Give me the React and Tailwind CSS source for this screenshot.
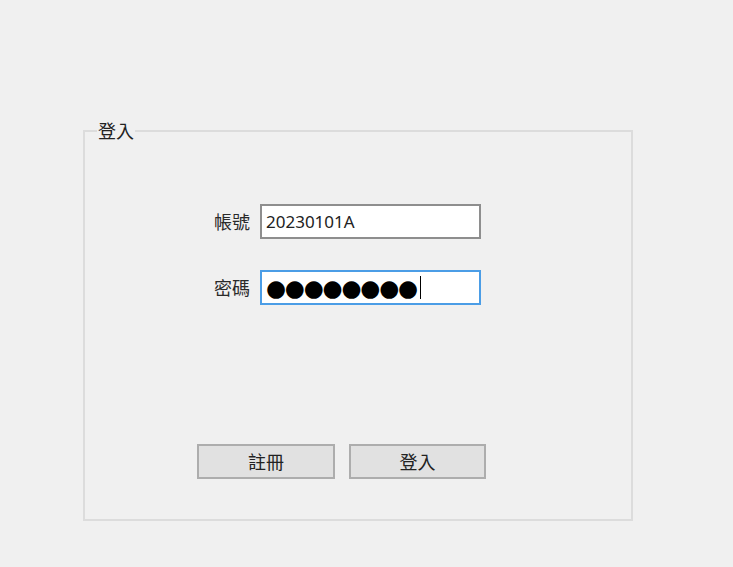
import React from 'react';

const font = { fontFamily: '"Noto Sans", "Noto Sans CJK TC", sans-serif' };

const Field = ({ label, children, focused = false }) => (
  <div className="flex items-center">
    <label className="w-[50px] pr-[10px] text-right text-[18px] leading-[20px] text-[#2a2a2a]">{label}</label>
    <div
      className={`flex h-[35px] w-[221px] items-center bg-white px-[4px] border-2 ${
        focused ? 'border-[#4b9de6]' : 'border-[#8e8e8e]'
      }`}
    >
      {children}
    </div>
  </div>
);

const Button = ({ children, width }) => (
  <button
    type="button"
    className={`h-[35px] ${width} border-2 border-[#adadad] bg-[#e1e1e1] text-[18px] leading-[20px] text-[#222]`}
  >
    {children}
  </button>
);

export default function App() {
  return (
    <div className="h-[567px] w-[733px] overflow-hidden bg-[#f0f0f0]" style={font}>
      <fieldset className="ml-[83px] mt-[121px] h-[400px] w-[550px] border-2 border-[#dcdcdc]">
        <legend className="ml-[12px] px-[1px] text-[18px] leading-[20px] text-[#222]">登入</legend>
        <div className="flex flex-col pl-[125px] pt-[63px]">
          <Field label="帳號">
            <span className="text-[17px] leading-[20px] text-[#222]">20230101A</span>
          </Field>
          <div className="mt-[31px]">
            <Field label="密碼" focused>
              <span className="flex items-center">
                <span
                  className="text-[23px] leading-[20px] tracking-[-1.2px] text-black"
                  style={{ fontFamily: '"DejaVu Sans", sans-serif' }}
                >
                  ●●●●●●●●
                </span>
                <span className="ml-[3px] h-[23px] w-px bg-black" />
              </span>
            </Field>
          </div>
        </div>
        <div className="mt-[139px] flex gap-[14px] pl-[112px]">
          <Button width="w-[138px]">註冊</Button>
          <Button width="w-[137px]">登入</Button>
        </div>
      </fieldset>
    </div>
  );
}
